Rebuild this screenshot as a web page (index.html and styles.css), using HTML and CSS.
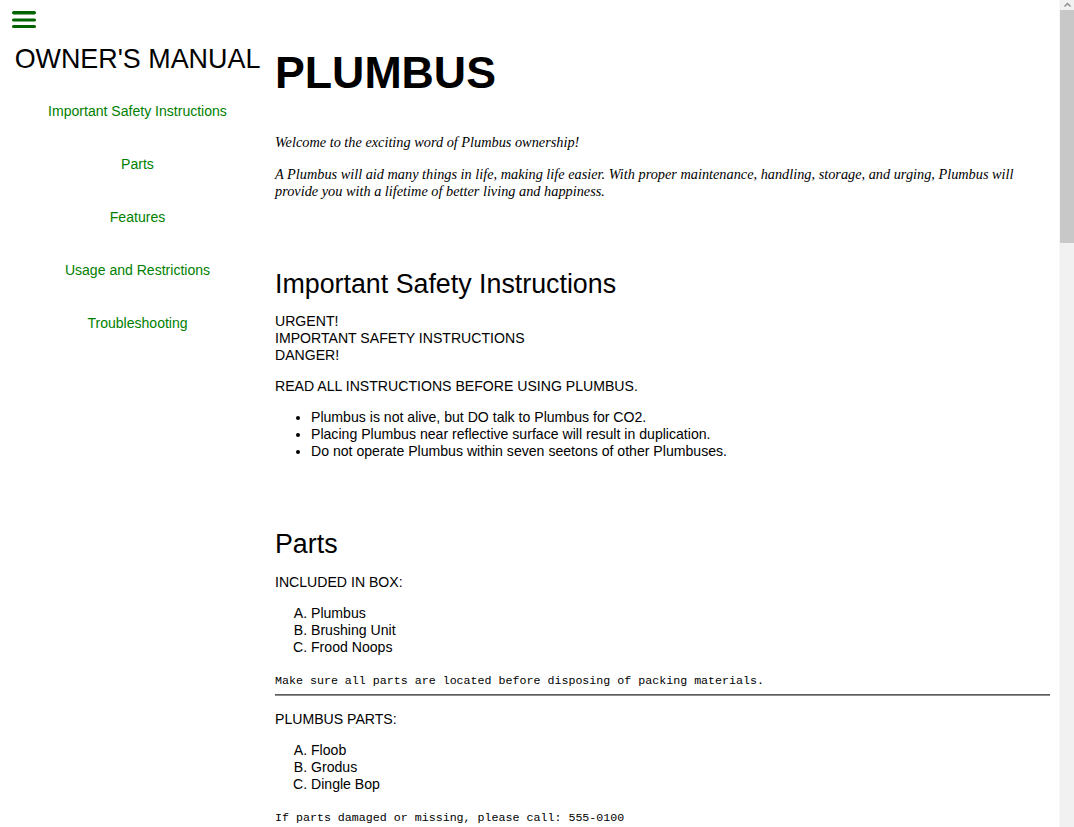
FILE: index.html
```html
<!DOCTYPE html>
<html lang="en">
<head>
<meta charset="utf-8">
<title>Plumbus Owner's Manual</title>
<link rel="stylesheet" href="styles.css">
</head>
<body>
<div class="page">
  <nav class="sidebar" id="navbar">
    <button class="menu-btn" aria-label="Menu">
      <svg width="24" height="18" viewBox="0 0 24 18" aria-hidden="true">
        <rect x="0" y="1" width="24" height="3.4" rx="1.7" fill="#006400"/>
        <rect x="0" y="8.6" width="24" height="3" rx="1.5" fill="#006400"/>
        <rect x="0" y="15" width="24" height="3" rx="1.5" fill="#006400"/>
      </svg>
    </button>
    <header class="nav-title">OWNER'S MANUAL</header>
    <ul class="nav-list">
      <li><a class="nav-link" href="#Important_Safety_Instructions">Important Safety Instructions</a></li>
      <li><a class="nav-link" href="#Parts">Parts</a></li>
      <li><a class="nav-link" href="#Features">Features</a></li>
      <li><a class="nav-link" href="#Usage_and_Restrictions">Usage and Restrictions</a></li>
      <li><a class="nav-link" href="#Troubleshooting">Troubleshooting</a></li>
    </ul>
  </nav>

  <main class="main" id="main-doc">
    <h1 class="title">PLUMBUS</h1>
    <div class="intro">
      <p>Welcome to the exciting word of Plumbus ownership!</p>
      <p>A Plumbus will aid many things in life, making life easier. With proper maintenance, handling, storage, and urging, Plumbus will provide you with a lifetime of better living and happiness.</p>
    </div>

    <section class="main-section" id="Important_Safety_Instructions">
      <h2>Important Safety Instructions</h2>
      <p>URGENT!<br>IMPORTANT SAFETY INSTRUCTIONS<br>DANGER!</p>
      <p>READ ALL INSTRUCTIONS BEFORE USING PLUMBUS.</p>
      <ul class="bullets">
        <li>Plumbus is not alive, but DO talk to Plumbus for CO2.</li>
        <li>Placing Plumbus near reflective surface will result in duplication.</li>
        <li>Do not operate Plumbus within seven seetons of other Plumbuses.</li>
      </ul>
    </section>

    <section class="main-section" id="Parts">
      <h2>Parts</h2>
      <p>INCLUDED IN BOX:</p>
      <ol class="alpha">
        <li>Plumbus</li>
        <li>Brushing Unit</li>
        <li>Frood Noops</li>
      </ol>
      <p class="note"><code>Make sure all parts are located before disposing of packing materials.</code></p>
      <hr class="rule">
      <p>PLUMBUS PARTS:</p>
      <ol class="alpha">
        <li>Floob</li>
        <li>Grodus</li>
        <li>Dingle Bop</li>
      </ol>
      <p class="note"><code>If parts damaged or missing, please call: 555-0100</code></p>
    </section>

    <section class="main-section" id="Features">
      <h2>Features</h2>
      <p>Plumbus is a versatile household device.</p>
    </section>

    <section class="main-section" id="Usage_and_Restrictions">
      <h2>Usage and Restrictions</h2>
      <p>Use Plumbus only as directed.</p>
    </section>

    <section class="main-section" id="Troubleshooting">
      <h2>Troubleshooting</h2>
      <p>If Plumbus does not respond, repeat urging.</p>
    </section>
  </main>
</div>

<div class="scrollbar" aria-hidden="true">
  <div class="scroll-up">
    <svg width="15" height="10" viewBox="0 0 15 10">
      <path d="M4.5 6.5 L7.5 3.5 L10.5 6.5" fill="none" stroke="#8a8a8a" stroke-width="1.4"/>
    </svg>
  </div>
  <div class="scroll-thumb"></div>
</div>
</body>
</html>
```

FILE: styles.css
```css
html, body {
  margin: 0;
  padding: 0;
  background: #ffffff;
}

body {
  font-family: "Liberation Sans", Arial, sans-serif;
  font-size: 14.1px;
  line-height: 17px;
  color: #000000;
}

.page {
  display: flex;
  align-items: flex-start;
}

.sidebar {
  flex: 0 0 275px;
  width: 275px;
  position: sticky;
  top: 0;
}

.menu-btn {
  display: block;
  margin: 10px 0 0 12px;
  padding: 0;
  border: 0;
  background: none;
  width: 24px;
  height: 18px;
  cursor: pointer;
}

.menu-btn svg {
  display: block;
}

.nav-title {
  margin-top: 16px;
  text-align: center;
  font-size: 26.9px;
  line-height: 31px;
}

.nav-list {
  list-style: none;
  margin: 10px 0 0;
  padding: 0;
}

.nav-link {
  display: block;
  padding: 18px 0;
  text-align: center;
  font-size: 14.05px;
  line-height: 17px;
  color: #008000;
  text-decoration: none;
}

.main {
  flex: 1 1 auto;
  min-width: 0;
  margin-right: 24px;
  padding-bottom: 1900px;
}

.title {
  margin: 47px 0 0;
  font-size: 44.7px;
  line-height: 51px;
  font-weight: bold;
}

.intro {
  margin-top: 36px;
  font-family: "Liberation Serif", "Times New Roman", serif;
  font-style: italic;
  font-size: 14.3px;
}

.intro p {
  margin: 0 0 15px;
}

.intro p:last-child {
  margin-bottom: 0;
}

.main-section {
  padding-top: 69px;
}

.main-section h2 {
  margin: 0 0 13px;
  font-size: 26.8px;
  line-height: 31px;
  font-weight: normal;
}

.main-section p,
.main-section ul,
.main-section ol {
  margin: 14px 0;
}

.main-section h2 + p {
  margin-top: 0;
}

.parts-intro {
  padding-top: 1px;
}

.main-section > :last-child {
  margin-bottom: 0;
}

.bullets,
.alpha {
  padding-left: 36px;
}

.bullets {
  list-style: disc;
}

.alpha {
  list-style: upper-alpha;
}

.main-section .note {
  margin-top: 16px;
  font-family: "Liberation Mono", "Courier New", monospace;
}

.note code {
  font-family: inherit;
  font-size: 11.65px;
}

.main-section .note + .rule {
  margin-top: -9px;
}

.rule {
  height: 0;
  margin: 0 0 15px;
  border: 0;
  border-top: 1px solid #5c5c5c;
  border-bottom: 1px solid #8e8e8e;
}

.main-section .rule + p {
  margin-top: 0;
}

#Parts h2 {
  margin-bottom: 14px;
}

/* decorative window scrollbar drawn over the page edge */
.scrollbar {
  position: fixed;
  top: 0;
  right: 0;
  width: 15px;
  height: 100vh;
  background: #f1f1f1;
  border-left: 1px solid #f8f8f8;
  box-sizing: border-box;
}

.scroll-up {
  height: 10px;
}

.scroll-up svg {
  display: block;
}

.scroll-thumb {
  position: absolute;
  top: 10px;
  left: 0;
  right: 0;
  height: 233px;
  background: #c8c8c8;
}
```
